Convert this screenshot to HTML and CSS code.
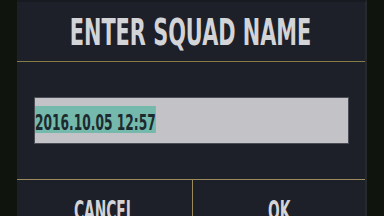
FILE: index.html
```
<!DOCTYPE html>
<html>
<head>
<title>Enter Squad Name</title>
<link rel="stylesheet" href="styles.css">
</head>
<body>

<div class="dialog">
  <div class="dialog-header">
    <h1 class="title"><span>ENTER SQUAD NAME</span></h1>
  </div>

  <div class="dialog-body">
    <div class="name-box">
      <span class="name-text"><span class="selected">2016.10.05 12:57</span></span>
    </div>
  </div>

  <div class="dialog-buttons">
    <div class="btn btn-cancel"><span>CANCEL</span></div>
    <div class="btn btn-ok"><span>OK</span></div>
  </div>
</div>

</body>
</html>
```

FILE: styles.css
```
body {
    margin: 0;
    padding: 0;
    width: 384px;
    height: 216px;
    overflow: hidden;
    background-color: #0f150d;
    font-family: "DejaVu Sans", sans-serif;
}

.dialog {
    width: 350px;
    height: 216px;
    margin-left: 17px;
    background-color: #1e2029;
    border-right: 2px solid #262a2c;
    border-top: 2px solid #181a21;
    box-sizing: border-box;
    display: flex;
    flex-direction: column;
    overflow: hidden;
}

.dialog-header {
    flex-shrink: 0;
    height: 58px;
    padding-top: 1px;
    border-bottom: 1px solid #857c48;
    display: flex;
    align-items: center;
    justify-content: center;
    overflow: hidden;
}

.title {
    margin: 0;
    font-size: 37px;
    font-weight: bold;
    color: #d3d4d8;
    line-height: 1;
    white-space: nowrap;
}

.title span {
    display: inline-block;
    transform: scaleX(0.563);
}

.dialog-body {
    flex-shrink: 0;
    height: 117px;
    padding: 35px 16px 0 17px;
    box-sizing: border-box;
}

.name-box {
    height: 47px;
    background-color: #c3c3c7;
    border: 1px solid #4b4d56;
    box-sizing: border-box;
    display: flex;
    align-items: center;
}

.name-text {
    display: inline-block;
    transform: scaleX(0.557);
    transform-origin: left center;
    font-size: 22px;
    font-weight: bold;
    color: #1c2a2e;
    white-space: nowrap;
}

.selected {
    display: inline-block;
    background-color: #75b9ad;
    padding-top: 7px;
    line-height: 20px;
    height: 20px;
}

.dialog-buttons {
    flex: 1;
    min-height: 0;
    display: flex;
    border-top: 1px solid #9c8b5a;
}

.btn {
    flex: 1;
    text-align: center;
    padding-top: 18px;
    font-size: 26px;
    font-weight: bold;
    color: #d3d4d8;
    line-height: 1;
    white-space: nowrap;
}

.btn span {
    display: inline-block;
    transform: scaleX(0.53);
}

.btn-cancel {
    flex: 0 0 175px;
}

.btn-ok {
    border-left: 1px solid #9c8b5a;
}
```
